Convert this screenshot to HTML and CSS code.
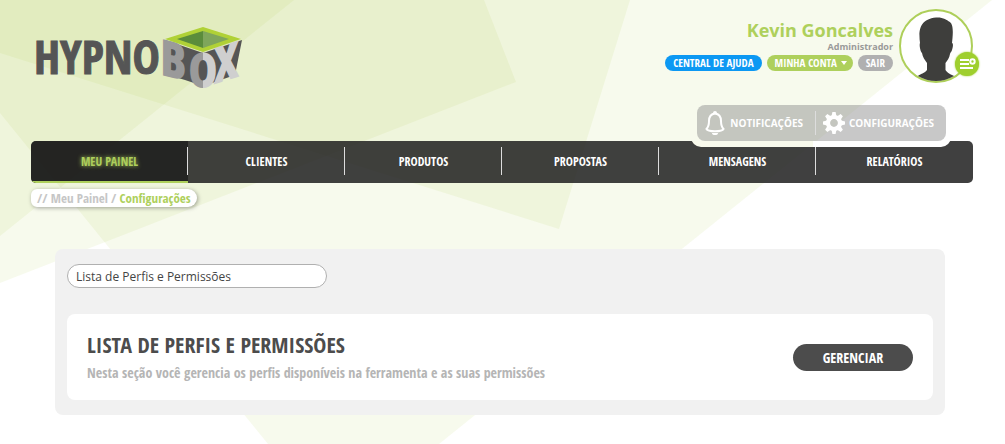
FILE: index.html
```html
<!DOCTYPE html>
<html lang="pt-BR">
<head>
<meta charset="utf-8">
<meta name="viewport" content="width=device-width, initial-scale=1">
<title>Hypnobox - Configurações</title>
<link rel="stylesheet" href="styles.css">
</head>
<body>
<svg class="backdrop" width="1005" height="444" viewBox="0 0 1005 444" aria-hidden="true">
  <polygon points="0,0 992,0 439,444 268,444 0,113"/>
  <polygon points="0,0 484,0 516,82 0,283"/>
  <polygon points="0,0 630,0 559,229 0,53"/>
  <polygon points="0,0 294,0 0,236"/>
</svg>
<div class="page">
  <header class="header">
    <a class="logo" href="#" aria-label="Hypnobox">
      <svg width="212" height="68" viewBox="0 0 212 68">
        <defs>
          <linearGradient id="fold">
            <stop offset=".5" stop-color="#9a9a9a"/>
            <stop offset=".5" stop-color="#cfcfcf"/>
          </linearGradient>
        </defs>
        <text class="logo-word" x="-1" y="49">HYPNO</text>
        <path d="M130 15 168 28 207 15 200 50 180 57 168 61 150 55 130 49Z" fill="#555"/>
        <text class="logo-letter" x="126" y="49" fill="#9a9a9a" stroke="#9a9a9a" transform="translate(126 49) skewY(14) translate(-126 -49)">B</text>
        <text class="logo-letter" x="180" y="58" fill="#cfcfcf" stroke="#cfcfcf" transform="translate(180 58) skewY(-17) translate(-180 -58)">X</text>
        <path d="M168 2 206 14 168 27 130 14Z" fill="#b0d136"/>
        <path d="M168 6V23L142 14Z" fill="#5b8c3b"/>
        <path d="M168 6 194 14 168 23Z" fill="#7fa65b"/>
        <text class="logo-letter logo-front" x="168" y="62" text-anchor="middle" fill="url(#fold)" stroke="url(#fold)">O</text>
      </svg>
    </a>
    <div class="user">
      <div class="user-info">
        <strong class="user-name">Kevin Goncalves</strong>
        <span class="user-role">Administrador</span>
        <div class="user-links">
          <a class="pill pill-help" href="#">CENTRAL DE AJUDA</a>
          <button class="pill pill-account" type="button">MINHA CONTA <svg width="6" height="4" viewBox="0 0 6 4"><path d="M0 0h6L3 4Z" fill="#fff"/></svg></button>
          <a class="pill pill-exit" href="#">SAIR</a>
        </div>
      </div>
      <div class="avatar">
        <svg width="74" height="74" viewBox="0 0 74 74" aria-hidden="true">
          <circle cx="37" cy="37" r="36" fill="#fff" stroke="#aecf5a" stroke-width="2"/>
          <path d="M37 8.500C44 8 48 11 50 12.500 53 14 54.500 18 53.500 29L53 34C54.500 34 54 38 53 41 52.500 43 51.500 43 51 45 50.500 49 48 52 46.500 54V61C48 64 53 66 55 67A35 35 0 0 1 19 67C21 65 26 64 28 61V54C26 51 23.500 48 23 44 21.500 43 20 36 21 34 19.500 22 20 10.500 37 8.500Z" fill="#3e3e3c"/>
        </svg>
        <button class="avatar-badge" type="button" aria-label="Opções do perfil">
          <svg width="17" height="12" viewBox="0 0 17 12"><path d="M1 2h9M1 6h9M1 10h13" stroke="#fff" stroke-width="2" fill="none"/><circle cx="13.500" cy="3.500" r="2.200" fill="none" stroke="#fff" stroke-width="2"/></svg>
        </button>
      </div>
    </div>
  </header>
  <div class="tools-dock">
    <div class="tools">
      <a class="tool" href="#">
        <svg width="20" height="24" viewBox="0 0 20 24"><path d="M10 2.500C6 3 4 6 4 10 4 14 3.500 16 1.500 18 3 21 17 21 18.500 18 16.500 16 16 14 16 10 16 6 14 3 10 2.500Z" fill="none" stroke="#fff" stroke-width="2"/><path d="M8 2a2 2 0 0 1 4 0ZM7 22h6a3 2 0 0 1-6 0Z" fill="#fff"/></svg>
        NOTIFICAÇÕES</a>
      <a class="tool" href="#">
        <svg width="22" height="22" viewBox="-11 -11 22 22"><g fill="#fff"><path id="cog" d="M-1.600-11h3.200l.8 4h-4.800ZM-1.600 11h3.200l.8-4h-4.800Z"/><use href="#cog" transform="rotate(45)"/><use href="#cog" transform="rotate(90)"/><use href="#cog" transform="rotate(135)"/></g><circle r="6" fill="none" stroke="#fff" stroke-width="4.200"/></svg>
        CONFIGURAÇÕES</a>
    </div>
  </div>
  <nav class="menu">
    <a class="menu-item menu-active" href="#">MEU PAINEL</a>
    <a class="menu-item" href="#">CLIENTES</a>
    <a class="menu-item" href="#">PRODUTOS</a>
    <a class="menu-item" href="#">PROPOSTAS</a>
    <a class="menu-item" href="#">MENSAGENS</a>
    <a class="menu-item" href="#">RELATÓRIOS</a>
  </nav>
  <div class="crumbs"><span>// <a href="#">Meu Painel</a> / </span><b>Configurações</b></div>
  <main class="panel">
    <input class="search" type="text" aria-label="Buscar configuração" value="Lista de Perfis e Permissões">
    <section class="card">
      <div>
        <h1 class="card-title">LISTA DE PERFIS E PERMISSÕES</h1>
        <p class="card-text">Nesta seção você gerencia os perfis disponíveis na ferramenta e as suas permissões</p>
      </div>
      <button class="manage" type="button">GERENCIAR</button>
    </section>
  </main>
</div>
</body>
</html>
```
FILE: styles.css
```css
* { box-sizing: border-box; }
body {
  margin: 0;
  background: #fff;
  font-family: "Open Sans Condensed", "Noto Sans Condensed", "Liberation Sans Narrow", "Open Sans", sans-serif;
  font-weight: 700;
}
a { color: inherit; text-decoration: none; }
button { border: 0; font: inherit; cursor: pointer; }
svg { display: block; }
.backdrop { position: absolute; top: 0; left: 0; z-index: -1; fill: rgba(170, 204, 60, .09); }
.page { padding: 0 32px 29px 31px; }

.header { display: flex; justify-content: space-between; align-items: flex-start; height: 105px; }
.logo { padding: 25px 0 0 4px; }
.logo svg { overflow: visible; }
.logo-word { font-size: 46px; fill: #555; stroke: #555; stroke-width: 1px; }
.logo-letter { font-size: 48px; stroke-width: 2px; }
.logo-front { font-size: 46px; }
.user { display: flex; gap: 6px; padding-top: 9px; }
.user-info { display: flex; flex-direction: column; align-items: flex-end; padding-top: 9px; }
.user-name { font: 700 18px/24px "Open Sans", sans-serif; color: #aed05c; }
.user-role { font: 700 9px/10px "Open Sans", sans-serif; color: #999; }
.user-links { display: flex; gap: 5px; margin-top: 3px; }
.pill {
  display: flex; align-items: center; gap: 4px; height: 16px; padding: 0 8px;
  border-radius: 8px; color: #fff; font-size: 11px; line-height: 16px;
}
.pill-help { background: #0c98f3; }
.pill-account { background: #aed05c; padding-right: 6px; }
.pill-exit { background: #b0b0b0; }
.avatar { position: relative; }
.avatar-badge {
  position: absolute; right: -6px; bottom: 7px; width: 24px; height: 24px; padding: 0;
  display: flex; align-items: center; justify-content: center;
  border-radius: 12px; background: #9fcf2e; box-shadow: 0 0 2px #9fcf2e;
}

.tools-dock {
  position: relative; z-index: 1; width: fit-content; margin: 0 22px -6px auto; padding: 0 5px 6px 6px;
  border-radius: 0 0 10px 10px;
  background: linear-gradient(90deg, #f8faec 122px, #fff 122px) 0 100% / 100% 6px no-repeat;
}
.tools { display: flex; height: 36px; padding: 6px 0; border-radius: 8px; background: rgba(145, 145, 145, .5); }
.tool {
  display: flex; align-items: center; gap: 5px; padding: 0 12px 0 8px;
  color: #fff; font: 700 10px/24px "Open Sans", sans-serif;
}
.tool + .tool { border-left: 1px solid #ddd; padding-left: 7px; gap: 4px; }

.menu { display: flex; height: 42px; border-radius: 5px; overflow: hidden; background: rgba(30, 30, 30, .85); }
.menu-item {
  position: relative; flex: 1; color: #fff; font-size: 12px; line-height: 42px; text-align: center;
}
.menu-item + .menu-item::before {
  content: ""; position: absolute; left: -1px; top: 6px; width: 1px; height: 28px; background: #ddd;
}
.menu-active {
  border-bottom: 2px solid #aed05c; background: rgba(20, 20, 20, .6); color: #aed05c;
  text-shadow: 0 0 4px #aed05c;
}
.crumbs {
  width: fit-content; margin-top: 6px; padding: 0 6px; border-radius: 6px 9px 9px 6px;
  background: #fff; box-shadow: 1px 1px 4px rgba(0, 0, 0, .35);
  color: #c6c6c6; font-size: 13px; line-height: 18px;
}
.crumbs b { color: #aed05c; }

.panel { margin: 42px 28px 0 24px; padding: 15px 12px; border-radius: 8px; background: #f1f1f1; }
.search {
  display: block; width: 260px; height: 24px; padding: 0 8px; border: 1px solid #b0b0b0; border-radius: 12px;
  background: #fff; color: #444; font: 400 12px/22px "Open Sans", sans-serif;
}
.card {
  display: flex; align-items: center; justify-content: space-between;
  margin-top: 26px; padding: 15px 20px; border-radius: 8px; background: #fff;
}
.card-title { margin: 0; color: #4c4c4c; font-size: 22px; line-height: 30px; }
.card-text { margin: 2px 0 0; color: #b5b5b5; font-size: 14px; line-height: 24px; }
.manage { width: 120px; height: 27px; border-radius: 14px; background: #4c4c4c; color: #fff; font-size: 14px; }
```
